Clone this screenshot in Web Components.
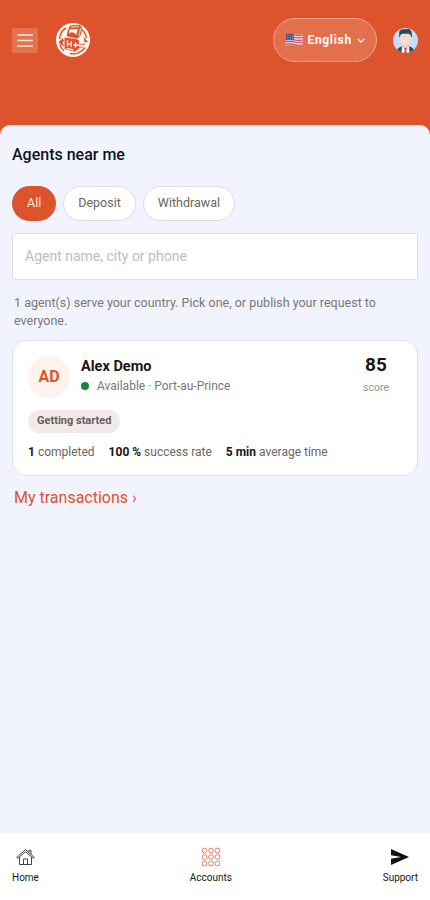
<!DOCTYPE html>
<html lang="en">
<head>
<meta charset="utf-8">
<title>Agents near me</title>
<style>
html,body{margin:0;height:100%}
body{font-family:Roboto,"Liberation Sans",sans-serif;background:#f1f4ff;overflow:hidden}
</style>
</head>
<body>
<agents-app></agents-app>
<script>
const define = (name, html) => customElements.define(name, class extends HTMLElement {
  constructor() {
    super();
    const t = document.createElement('template');
    t.innerHTML = html;
    this.attachShadow({mode: 'open'}).append(t.content.cloneNode(true));
  }
});

define('menu-button', `<style>
:host{display:flex;align-items:center;justify-content:center;width:26px;height:25px;border-radius:2px;background:#e4724f}
svg{display:block}</style>
<svg width="16" height="13" viewBox="0 0 16 13"><path d="M0 1H16M0 6.500H16M0 12H16" stroke="#fde6dc" stroke-width="1.600"/></svg>`);

define('brand-logo', `<style>:host{display:block;width:34px;height:34px}svg{display:block}</style>
<svg width="34" height="34" viewBox="0 0 34 34">
<circle cx="17" cy="17" r="17" fill="#fffaf5"/>
<path d="M10 5A14 14 0 0 0 3.500 16M26 6.500A14 14 0 0 1 30.500 15M29 24.500A14 14 0 0 1 14 30.500M3.800 21.500A14 14 0 0 0 8 28" fill="none" stroke="#dd532b" stroke-width="1.500"/>
<path d="M2.500 19.500L6.300 15 8.300 18 6.500 19 8 24ZM27.500 13.500L32 19 28.500 19.500Z" fill="#dd532b"/>
<path d="M14 2.500L23.500 1.800 26.300 4.500 24.500 12.500 21 16 10.500 14 11.500 8Z" fill="#dd532b"/>
<path d="M15 4.200L23 3.600M24.600 5L22.800 12.800" fill="none" stroke="#fffaf5" stroke-width=".9"/>
<path d="M13.600 6.500L21.800 6 20.300 12Q17.500 7.500 12.600 10.500Z" fill="#fffaf5"/>
<path d="M9.500 13.600L20.500 15.700" fill="none" stroke="#fffaf5" stroke-width=".9"/>
<path d="M8.500 14.500L20 16 23 17.500V25.500L19 28.800 8.500 26Z" fill="#dd532b"/>
<path d="M11.500 17.300V23.500M15.300 18V24M11.500 20.700L15.500 21M10.500 25.300L17.500 26.800" stroke="#fffaf5" stroke-width="1.300" fill="none"/>
<path d="M17.500 22H23M19.500 19.500V24.500" stroke="#fffaf5" stroke-width="1.500"/><path d="M23 21.300H29M22.500 24.500L27 24" stroke="#dd532b" stroke-width=".9"/>
</svg>`);

define('language-picker', `<style>
:host{box-sizing:border-box;display:flex;align-items:center;width:104px;height:44px;padding-left:10.500px;border:1px solid #eda48b;border-radius:22px;background:#e2704c;color:#fff;font-weight:700;font-size:12px;letter-spacing:.68px}
svg{display:block}.flag{margin-right:5px}.chev{margin-left:5.500px;margin-top:1px}</style>
<svg class="flag" width="18" height="14" viewBox="0 0 18 14">
<path d="M.5 1Q5 -.3 9 1T17.500 1.300V12.800Q13 13.800 9 12.600T.5 12.600Z" fill="#f5e6e3"/>
<path d="M8 1.500Q13 3 17.500 2M8 4Q13 5.500 17.500 4.500M8 6.500Q13 8 17.500 7M.5 9Q5 7.800 9 9T17.500 9.500M.5 11.500Q5 10.300 9 11.600T17.500 12" fill="none" stroke="#bf4654" stroke-width="1.200"/>
<path d="M.5 1Q5 -.3 8.800 1V7.600Q5 6.600.5 7.700Z" fill="#4a5487"/>
<path d="M1.800 2.600H8M1.800 4.500H8M1.800 6.200H8" stroke="#b9bbd2" stroke-width=".7" stroke-dasharray=".8 1"/>
</svg><slot></slot>
<svg class="chev" width="8" height="6" viewBox="0 0 8 6"><path d="M1 1L4 4.200 7 1" fill="none" stroke="#fff" stroke-width="1.100" stroke-linecap="round"/></svg>`);

define('user-avatar', `<style>:host{display:block;width:25px;height:25px;border-radius:50%;overflow:hidden}svg{display:block}</style>
<svg width="25" height="25" viewBox="0 0 25 25"><rect width="25" height="25" fill="#c7dcf5"/>
<path d="M4.500 25V21.500Q5 19.500 9 18.500H16Q20 19.500 20.500 21.500V25Z" fill="#2b4c63"/>
<path d="M9 18.500L12.500 20 16 18.500 16.500 25H8.500Z" fill="#fff"/><path d="M11 20H14L13.300 22 13.800 25H11.200L11.700 22Z" fill="#d8424c"/>
<path d="M10 14H15V18.800L12.500 20.300 10 18.800Z" fill="#f2cdbb"/>
<path d="M6.200 9V4.500Q6.500 1 11 1.200L16 1Q19.200 1.500 18.800 9Z" fill="#28485d"/>
<path d="M7.200 7.500Q8 5.800 9.500 5.800H15.500Q17 5.800 17.800 7.500V11.500Q17 17.300 12.500 17.800 8 17.300 7.200 11.500Z" fill="#fbdccc"/></svg>`);

define('app-header', `<style>
:host{display:flex;align-items:flex-start;height:125px;box-sizing:border-box;padding:18px 12px 0}
div{display:flex;align-items:center;width:100%;height:44px}
brand-logo{margin-left:18px}language-picker{margin-left:auto}user-avatar{margin-left:16px}</style>
<div><menu-button></menu-button><brand-logo></brand-logo><language-picker>English</language-picker><user-avatar></user-avatar></div>`);

define('filter-chip', `<style>
:host{box-sizing:border-box;height:35px;padding:0 14px 2px;display:flex;align-items:center;border:1px solid #dfdcdd;border-radius:18px;background:#fff;color:#6b6461;font-size:12.500px;line-height:31px}
:host([active]){background:#dd532b;border-color:#dd532b;color:#fdeae2}</style><slot></slot>`);

define('search-field', `<style>
:host{box-sizing:border-box;display:flex;align-items:center;height:47px;padding:0 12px 1px;border:1px solid #dedfe1;border-radius:3px;background:#fff;color:#bdbdbd;font-size:14px}</style><slot></slot>`);

define('stat-item', `<style>:host{display:block;color:#6b6461;font-size:12px;line-height:16px}b{color:#1b1614;font-weight:700}</style><b><slot name="value"></slot></b> <slot></slot>`);

define('agent-card', `<style>
:host{box-sizing:border-box;display:block;height:136px;padding:15px;border:1px solid #e5e1e3;border-radius:14px;background:#fff}
.top{display:flex;height:42px}
.initials{width:42px;height:42px;border-radius:50%;background:#fef2ed;color:#dd532b;font-weight:700;font-size:16px;line-height:42px;text-align:center}
.info{margin-left:11px;flex:1}
.name{font-weight:700;font-size:14.500px;line-height:19px;padding-top:1px;color:#1b1614}
.status{display:flex;align-items:center;font-size:12px;line-height:20px;color:#7d7673}
.status i{width:8px;height:8px;border-radius:50%;background:#1b8043;margin-right:8px}
.score{width:52px;text-align:center}
.num{font-weight:700;font-size:19px;line-height:18px;color:#1b1614}
.lab{font-size:10.500px;line-height:14px;margin-top:7px;color:#9a9491}
.tag{display:inline-block;box-sizing:border-box;margin-top:12px;height:23px;padding:0 9px;border-radius:12px;background:#f1eae8;color:#6b5d59;font-weight:700;font-size:11px;line-height:21px;vertical-align:top}
.stats{display:flex;gap:14px;margin-top:11px}</style>
<div class="top"><div class="initials"><slot name="initials"></slot></div>
<div class="info"><div class="name"><slot name="name"></slot></div><div class="status"><i></i><slot name="status"></slot></div></div>
<div class="score"><div class="num"><slot name="score"></slot></div><div class="lab">score</div></div></div>
<div class="tag"><slot name="tag"></slot></div>
<div class="stats"><slot></slot></div>`);

define('nav-item', `<style>:host{display:flex;flex-direction:column;align-items:center;font-size:10px;line-height:14px;color:#161616}
.icon{height:20px;display:flex;align-items:center;margin-bottom:4px}::slotted(svg){display:block}</style>
<div class="icon"><slot name="icon"></slot></div><slot></slot>`);

define('bottom-nav', `<style>:host{box-sizing:border-box;display:flex;justify-content:space-between;height:67px;padding:14px 12px 0;background:#fff}</style>
<nav-item>Home<svg slot="icon" width="19" height="18" viewBox="0 0 19 18" fill="none" stroke="#444" stroke-width="1"><path d="M.8 9.300L9.500 1.600 18.200 9.300 17.200 10.300 9.500 3.700 1.800 10.300ZM3.500 9.300V16.500H15.500V9.300M7.500 16.500V11H11.500V16.500M13 4.500V2.300H15V6.500"/></svg></nav-item>
<nav-item>Accounts<svg slot="icon" width="20" height="20" viewBox="0 0 20 20" fill="none" stroke="#df8065" stroke-width="1"><circle cx="3.500" cy="3.500" r="2.400"/><circle cx="10" cy="3.500" r="2.400"/><circle cx="16.500" cy="3.500" r="2.400"/><circle cx="3.500" cy="10" r="2.400"/><circle cx="10" cy="10" r="2.400"/><circle cx="16.500" cy="10" r="2.400"/><circle cx="3.500" cy="16.500" r="2.400"/><circle cx="10" cy="16.500" r="2.400"/><circle cx="16.500" cy="16.500" r="2.400"/></svg></nav-item>
<nav-item>Support<svg slot="icon" width="18" height="16" viewBox="0 0 18 16"><path d="M0 0L18 8 0 16V9.800L10 8 0 6.200Z" fill="#111"/></svg></nav-item>`);

define('agents-app', `<style>
:host{display:flex;flex-direction:column;height:900px;background:#dd532b}
main{flex:1;box-sizing:border-box;padding:19px 12px 0;border-radius:10px 10px 0 0;background:#f1f4ff}
h1{margin:0;font-size:16px;font-weight:500;line-height:22px;color:#10131c}
.chips{display:flex;gap:7px;margin:20px 0 12px}
p{margin:14px 2px 10px;font-size:12.500px;line-height:18px;color:#7d7673}
a{display:block;margin:11px 2px 0;font-size:16px;line-height:22px;color:#dd532b}</style>
<app-header></app-header>
<main><h1>Agents near me</h1>
<div class="chips"><filter-chip active>All</filter-chip><filter-chip>Deposit</filter-chip><filter-chip>Withdrawal</filter-chip></div>
<search-field>Agent name, city or phone</search-field>
<p>1 agent(s) serve your country. Pick one, or publish your request to everyone.</p>
<agent-card><span slot="initials">AD</span><span slot="name">Alex Demo</span><span slot="status">Available · Port-au-Prince</span><span slot="score">85</span><span slot="tag">Getting started</span>
<stat-item><span slot="value">1</span>completed</stat-item><stat-item><span slot="value">100 %</span>success rate</stat-item><stat-item><span slot="value">5 min</span>average time</stat-item></agent-card>
<a>My transactions ›</a></main>
<bottom-nav></bottom-nav>`);
</script>
</body>
</html>
